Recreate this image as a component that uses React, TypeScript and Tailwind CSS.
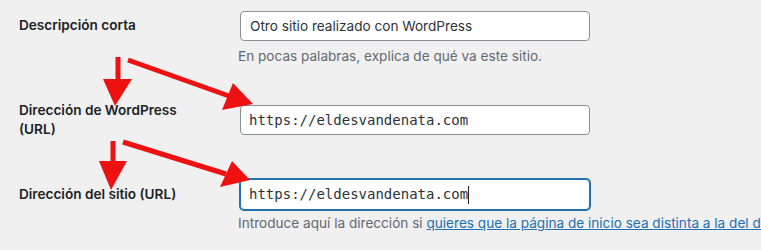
import React from "react";

const sans = { fontFamily: "Inter, 'Noto Sans', 'Liberation Sans', sans-serif" };
const mono = { fontFamily: "'DejaVu Sans Mono', 'Liberation Mono', monospace" };

export default function App() {
  return (
    <div
      className="relative w-[761px] h-[250px] overflow-hidden bg-[#f0f0f1] text-[#1d2327]"
      style={sans}
    >
      <div className="pt-[11px]">
        {/* Row 1 */}
        <div className="flex">
          <div className="w-[240px] shrink-0 pl-[19px] pr-[30px] pt-[5px] text-[13.6px] leading-[18px] font-semibold">
            Descripción corta
          </div>
          <div className="flex flex-col">
            <div className="w-[350px] h-[30px] border border-[#8c8f94] rounded-[4px] bg-white flex items-center px-[9px] text-[13.6px] text-[#2c3338]">
              Otro sitio realizado con WordPress
            </div>
            <div className="mt-[6px] -ml-[2px] text-[13.6px] leading-[19px] text-[#646970] whitespace-nowrap">
              En pocas palabras, explica de qué va este sitio.
            </div>
          </div>
        </div>

        {/* Row 2 */}
        <div className="flex mt-[35px]">
          <div className="w-[240px] shrink-0 pl-[19px] pr-[52px] text-[13.6px] leading-[19px] font-semibold">
            Dirección de WordPress (URL)
          </div>
          <div className="flex flex-col pt-[4px]">
            <div
              className="w-[350px] h-[30px] border border-[#8c8f94] rounded-[4px] bg-white flex items-center px-[8px] text-[14px] text-[#2c3338]"
              style={mono}
            >
              https://eldesvandenata.com
            </div>
          </div>
        </div>

        {/* Row 3 */}
        <div className="flex mt-[40px]">
          <div className="w-[240px] shrink-0 pl-[19px] pt-[6px] text-[13.6px] leading-[18px] font-semibold whitespace-nowrap">
            Dirección del sitio (URL)
          </div>
          <div className="flex flex-col">
            <div
              className="w-[350px] h-[31px] border border-[#2271b1] shadow-[0_0_0_1px_#2271b1] rounded-[4px] bg-white flex items-center px-[8px] text-[14px] text-[#2c3338]"
              style={mono}
            >
              https://eldesvandenata.com
              <span className="inline-block w-px h-[18px] bg-[#1d2327]" />
            </div>
            <div className="mt-[4px] -ml-[2px] text-[13.6px] leading-[19px] text-[#646970] whitespace-nowrap">
              Introduce aquí la dirección si{" "}
              <span className="text-[#2271b1] underline">
                quieres que la página de inicio sea distinta a la del directorio de instalación de WordPress
              </span>
              .
            </div>
          </div>
        </div>
      </div>

      {/* Red annotation arrows */}
      <svg
        className="absolute inset-0 pointer-events-none"
        width="761"
        height="250"
        viewBox="0 0 761 250"
      >
        <g fill="#ee1111" stroke="#ee1111">
          <line x1="118" y1="57" x2="118" y2="81" strokeWidth="5" />
          <polygon points="103,79 132,79 115,106" stroke="none" />
          <line x1="128" y1="60" x2="229" y2="96" strokeWidth="5" />
          <polygon points="233,83 222,110 253,104" stroke="none" />
          <line x1="113" y1="141" x2="113" y2="163" strokeWidth="5" />
          <polygon points="99,161 127,161 111,190" stroke="none" />
          <line x1="123" y1="142" x2="226" y2="174" strokeWidth="5" />
          <polygon points="232,161 220,187 250,180" stroke="none" />
        </g>
      </svg>
    </div>
  );
}
